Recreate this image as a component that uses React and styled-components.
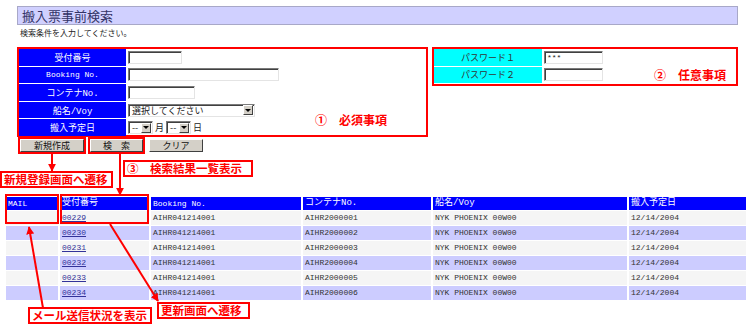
import React from 'react'
import styled, { createGlobalStyle } from 'styled-components'

const GlobalStyle = createGlobalStyle`
body{
    margin:0;
    background:#fff;
}
`

const Page = styled.div`
position: relative;
width: 750px;
height: 334px;
overflow: hidden;
padding-top: 6px;
box-sizing: border-box;
font-family: "Liberation Mono", "Noto Sans CJK JP", monospace;
color: #333;
`

const TitleBar = styled.h1`
margin: 0 12px 0 17px;
height: 19px;
box-sizing: border-box;
border: 1px solid #a8a8c8;
background: #d0d0ff;
padding-left: 4px;
font-family: "Noto Sans CJK JP", sans-serif;
font-size: 13px;
font-weight: 400;
line-height: 17px;
color: #333366;
`

const Lead = styled.p`
margin: 2px 0 0 20px;
height: 12px;
font-family: "Noto Sans CJK JP", sans-serif;
font-size: 8px;
line-height: 12px;
color: #222;
`

const FormRow = styled.div`
display: flex;
align-items: flex-start;
gap: 4px;
margin: 8px 0 0 17px;
`

const SectionBox = styled.div`
display: flex;
width: ${p => p.$w}px;
height: ${p => p.$h}px;
box-sizing: border-box;
border: 2px solid #ff0000;
`

const FieldGrid = styled.div`
display: grid;
grid-template-columns: ${p => p.$label}px auto;
grid-auto-rows: 16.6px;
column-gap: 2px;
row-gap: 1px;
`

const Label = styled.div`
display: flex;
align-items: center;
justify-content: center;
background: ${p => (p.$tone === 'cyan' ? '#00ffff' : '#0000ff')};
color: ${p => (p.$tone === 'cyan' ? '#333' : '#fff')};
font-size: ${p => (p.$latin ? 8 : 9)}px;
`

const FieldCell = styled.div`
display: flex;
align-items: center;
gap: 2px;
font-family: "Noto Sans CJK JP", sans-serif;
font-size: 9px;
color: #222;
`

const TextInput = styled.input`
width: ${p => p.$w}px;
height: 13px;
box-sizing: border-box;
margin: 0;
padding: 0 2px;
border: 1px solid;
border-color: #7a7a7a #e4e4e4 #e4e4e4 #7a7a7a;
box-shadow: inset 1px 1px 0 #404040;
background: #fff;
font-family: "Liberation Mono", monospace;
font-size: 8px;
color: #222;
outline: none;
`

const FakeSelect = styled.div`
display: flex;
align-items: center;
justify-content: space-between;
width: ${p => p.$w}px;
height: 13px;
box-sizing: border-box;
border: 1px solid;
border-color: #7a7a7a #e4e4e4 #e4e4e4 #7a7a7a;
box-shadow: inset 1px 1px 0 #404040;
background: #fff;
padding-left: 3px;
font-family: "Noto Sans CJK JP", sans-serif;
font-size: 9px;
line-height: 11px;
color: #222;
`

const DropButton = styled.span`
display: flex;
align-items: center;
justify-content: center;
width: 10px;
height: 10px;
margin-right: 1px;
box-sizing: border-box;
background: #d4d0c8;
border: 1px solid;
border-color: #fff #404040 #404040 #fff;
&::after{
    content: '';
    border-left: 3px solid transparent;
    border-right: 3px solid transparent;
    border-top: 3px solid #000;
}
`

const Note = styled.div`
align-self: flex-end;
margin: 0 ${p => p.$right}px ${p => p.$bottom}px auto;
font-family: "Noto Sans CJK JP", sans-serif;
font-size: 12px;
font-weight: 700;
line-height: 14px;
color: #ff0000;
white-space: nowrap;
`

const ButtonRow = styled.div`
display: flex;
align-items: center;
gap: 2px;
margin: 0 0 0 18px;
`

const Mark = styled.div`
border: 2px solid ${p => (p.$on ? '#ff0000' : 'transparent')};
`

const Button = styled.button`
display: block;
width: ${p => p.$w}px;
height: 13px;
margin: 0;
padding: 0;
box-sizing: border-box;
background: #d4d0c8;
border: 1px solid;
border-color: #fff #404040 #404040 #fff;
font-family: "Noto Sans CJK JP", sans-serif;
font-size: 9px;
line-height: 11px;
color: #111;
white-space: pre;
`

const ResultTable = styled.table`
margin: 42px 0 0 4px;
border-collapse: separate;
border-spacing: 2px 1px;
table-layout: fixed;
width: 744px;
`

const HeadCell = styled.th`
height: 13px;
padding: 0 2px;
background: #0000ff;
color: #fff;
font-size: ${p => (p.$latin ? 8 : 9)}px;
font-weight: 400;
text-align: left;
line-height: 13px;
white-space: nowrap;
overflow: hidden;
`

const Cell = styled.td`
height: 14px;
padding: 0 2px;
background: ${p => (p.$alt ? '#ccccff' : '#f5f5f5')};
font-size: 8px;
line-height: 14px;
color: #333;
white-space: nowrap;
`

const TicketLink = styled.a`
color: #333399;
text-decoration: underline;
`

const Frame = styled.div`
position: absolute;
left: ${p => p.$x}px;
top: ${p => p.$y}px;
width: ${p => p.$w}px;
height: ${p => p.$h}px;
box-sizing: border-box;
border: 2px solid #ff0000;
pointer-events: none;
`

const Callout = styled.div`
position: absolute;
left: ${p => p.$x}px;
top: ${p => p.$y}px;
box-sizing: border-box;
border: 2px solid #ff0000;
background: #fff;
padding: 0 ${p => p.$pad || 3}px 0 2px;
font-family: "Noto Sans CJK JP", sans-serif;
font-size: 11.5px;
font-weight: 700;
line-height: 13px;
color: #ff0000;
white-space: nowrap;
`

const ArrowLayer = styled.svg`
position: absolute;
left: 0;
top: 0;
pointer-events: none;
`

const rows = [
    { no: '00229', container: 'AIHR2000001' },
    { no: '00230', container: 'AIHR2000002' },
    { no: '00231', container: 'AIHR2000003' },
    { no: '00232', container: 'AIHR2000004' },
    { no: '00233', container: 'AIHR2000005' },
    { no: '00234', container: 'AIHR2000006' },
]

const arrows = [
    [52, 152, 52, 171],
    [120, 152, 120, 195],
    [43, 308, 29, 227],
    [110, 224, 158, 301],
]

const Arrows = () => (
    <ArrowLayer width="750" height="334">
        <defs>
            <marker id="head" viewBox="0 0 10 10" refX="9" refY="5" markerWidth="4" markerHeight="4" orient="auto">
                <path d="M0 0 L10 5 L0 10 z" fill="#ff0000" />
            </marker>
        </defs>
        {arrows.map(([x1, y1, x2, y2], i) => (
            <line key={i} x1={x1} y1={y1} x2={x2} y2={y2} stroke="#ff0000" strokeWidth="2" markerEnd="url(#head)" />
        ))}
    </ArrowLayer>
)

const App = () => {
    return (
        <Page>
            <GlobalStyle />
            <TitleBar>搬入票事前検索</TitleBar>
            <Lead>検索条件を入力してください。</Lead>

            <FormRow>
                <SectionBox $w={411} $h={90}>
                    <FieldGrid $label={107}>
                        <Label>受付番号</Label>
                        <FieldCell><TextInput $w={54} /></FieldCell>
                        <Label $latin>Booking No.</Label>
                        <FieldCell><TextInput $w={151} /></FieldCell>
                        <Label>コンテナNo.</Label>
                        <FieldCell><TextInput $w={67} /></FieldCell>
                        <Label>船名/Voy</Label>
                        <FieldCell>
                            <FakeSelect $w={127}>選択してください<DropButton /></FakeSelect>
                        </FieldCell>
                        <Label>搬入予定日</Label>
                        <FieldCell>
                            <FakeSelect $w={25}>--<DropButton /></FakeSelect>月
                            <FakeSelect $w={25}>--<DropButton /></FakeSelect>日
                        </FieldCell>
                    </FieldGrid>
                    <Note $right={39} $bottom={8}>①　必須事項</Note>
                </SectionBox>

                <SectionBox $w={306} $h={39}>
                    <FieldGrid $label={108}>
                        <Label $tone="cyan">パスワード１</Label>
                        <FieldCell><TextInput $w={59} defaultValue="***" /></FieldCell>
                        <Label $tone="cyan">パスワード２</Label>
                        <FieldCell><TextInput $w={59} /></FieldCell>
                    </FieldGrid>
                    <Note $right={10} $bottom={2}>②　任意事項</Note>
                </SectionBox>
            </FormRow>

            <ButtonRow>
                <Mark $on><Button $w={64}>新規作成</Button></Mark>
                <Mark $on><Button $w={53}>{'検　索'}</Button></Mark>
                <Mark><Button $w={54}>クリア</Button></Mark>
            </ButtonRow>

            <ResultTable>
                <colgroup>
                    <col style={{ width: 52 }} />
                    <col style={{ width: 89 }} />
                    <col style={{ width: 150 }} />
                    <col style={{ width: 128 }} />
                    <col style={{ width: 194 }} />
                    <col style={{ width: 117 }} />
                </colgroup>
                <thead>
                    <tr>
                        <HeadCell $latin>MAIL</HeadCell>
                        <HeadCell>受付番号</HeadCell>
                        <HeadCell $latin>Booking No.</HeadCell>
                        <HeadCell>コンテナNo.</HeadCell>
                        <HeadCell>船名/Voy</HeadCell>
                        <HeadCell>搬入予定日</HeadCell>
                    </tr>
                </thead>
                <tbody>
                    {rows.map((r, i) => (
                        <tr key={r.no}>
                            <Cell $alt={i % 2 === 1} />
                            <Cell $alt={i % 2 === 1}><TicketLink href="#">{r.no}</TicketLink></Cell>
                            <Cell $alt={i % 2 === 1}>AIHR041214001</Cell>
                            <Cell $alt={i % 2 === 1}>{r.container}</Cell>
                            <Cell $alt={i % 2 === 1}>NYK PHOENIX 00W00</Cell>
                            <Cell $alt={i % 2 === 1}>12/14/2004</Cell>
                        </tr>
                    ))}
                </tbody>
            </ResultTable>

            <Frame $x={5} $y={194} $w={54} $h={30} />
            <Frame $x={60} $y={194} $w={89} $h={30} />

            <Arrows />

            <Callout $x={0} $y={171}>新規登録画面へ遷移</Callout>
            <Callout $x={123} $y={160} $pad={9}>③　検索結果一覧表示</Callout>
            <Callout $x={28} $y={307}>メール送信状況を表示</Callout>
            <Callout $x={157} $y={302} $pad={6}>更新画面へ遷移</Callout>
        </Page>
    )
}

export default App
